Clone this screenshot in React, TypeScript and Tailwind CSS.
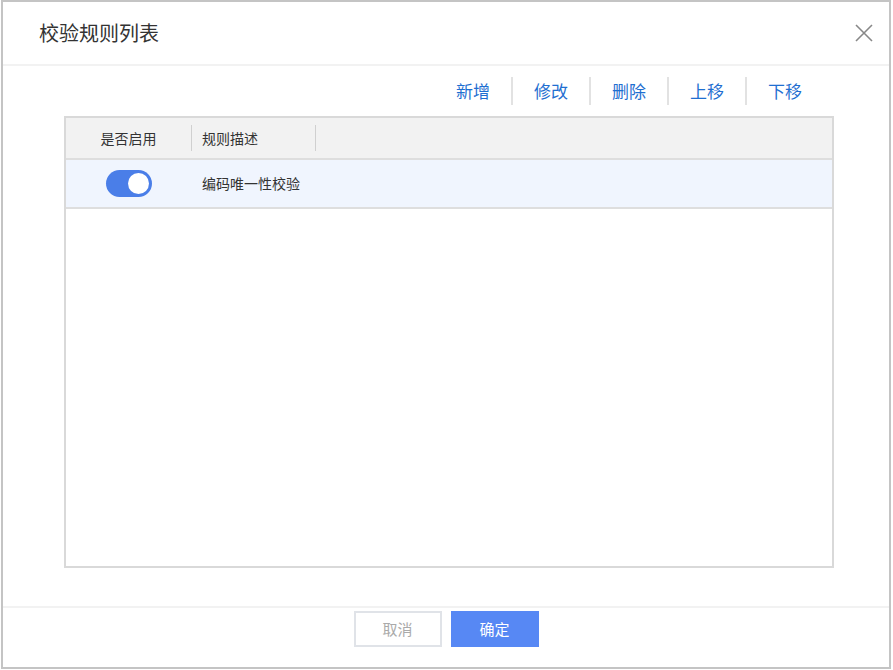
import React from "react";

export default function App() {
  const f = { fontFamily: '"Noto Sans CJK SC", "Noto Sans", sans-serif' };
  const btns = ["新增", "修改", "删除", "上移", "下移"];
  return (
    <div style={f} className="w-[893px] h-[670px] bg-white">
      <div className="w-[890px] h-[669px] ml-[1px] border-2 border-[#c4c4c4] flex flex-col">
        <div className="h-[64px] flex items-center justify-between pl-[36px] pr-[14px] border-b-2 border-[#f2f2f2]">
          <span className="text-[20px] text-[#333]">校验规则列表</span>
          <svg width="22" height="22" viewBox="0 0 22 22" stroke="#888" strokeWidth="1.6" fill="none">
            <path d="M3 3L19 19M19 3L3 19" />
          </svg>
        </div>
        <div className="flex-1 flex flex-col">
          <div className="h-[50px] flex items-center justify-end pr-[66px]">
            {btns.map((b, i) => (
              <div key={b} className={`px-[21px] text-[17px] text-[#1f6fd1] leading-[28px] ${i < btns.length - 1 ? "border-r-2 border-[#e2e2e2]" : ""}`}>
                {b}
              </div>
            ))}
          </div>
          <div className="ml-[61px] w-[770px] h-[452px] border-2 border-[#d9d9d9] flex flex-col">
            <div className="h-[42px] bg-[#f2f2f2] flex items-center text-[14px] text-[#333] border-b-2 border-[#dedede]">
              <div className="w-[126px] text-center border-r border-[#d0d0d0] leading-[26px]">是否启用</div>
              <div className="w-[124px] pl-[10px] border-r border-[#d0d0d0] leading-[26px]">规则描述</div>
            </div>
            <div className="h-[49px] bg-[#f0f5fe] flex items-center text-[14px] text-[#333] border-b-2 border-[#dedede]">
              <div className="w-[126px] flex justify-center">
                <div className="w-[46px] h-[27px] rounded-full bg-[#4a7ee8] flex items-center justify-end pr-[3px]">
                  <div className="w-[21px] h-[21px] rounded-full bg-white" />
                </div>
              </div>
              <div className="pl-[10px]">编码唯一性校验</div>
            </div>
          </div>
        </div>
        <div className="h-[61px] border-t-2 border-[#f2f2f2] flex justify-center items-start pt-[3px] gap-[9px]">
          <div className="w-[88px] h-[36px] border-2 border-[#e0e3e8] flex items-center justify-center text-[15px] text-[#aaa]">取消</div>
          <div className="w-[88px] h-[36px] bg-[#5788f4] flex items-center justify-center text-[15px] text-white">确定</div>
        </div>
      </div>
    </div>
  );
}
